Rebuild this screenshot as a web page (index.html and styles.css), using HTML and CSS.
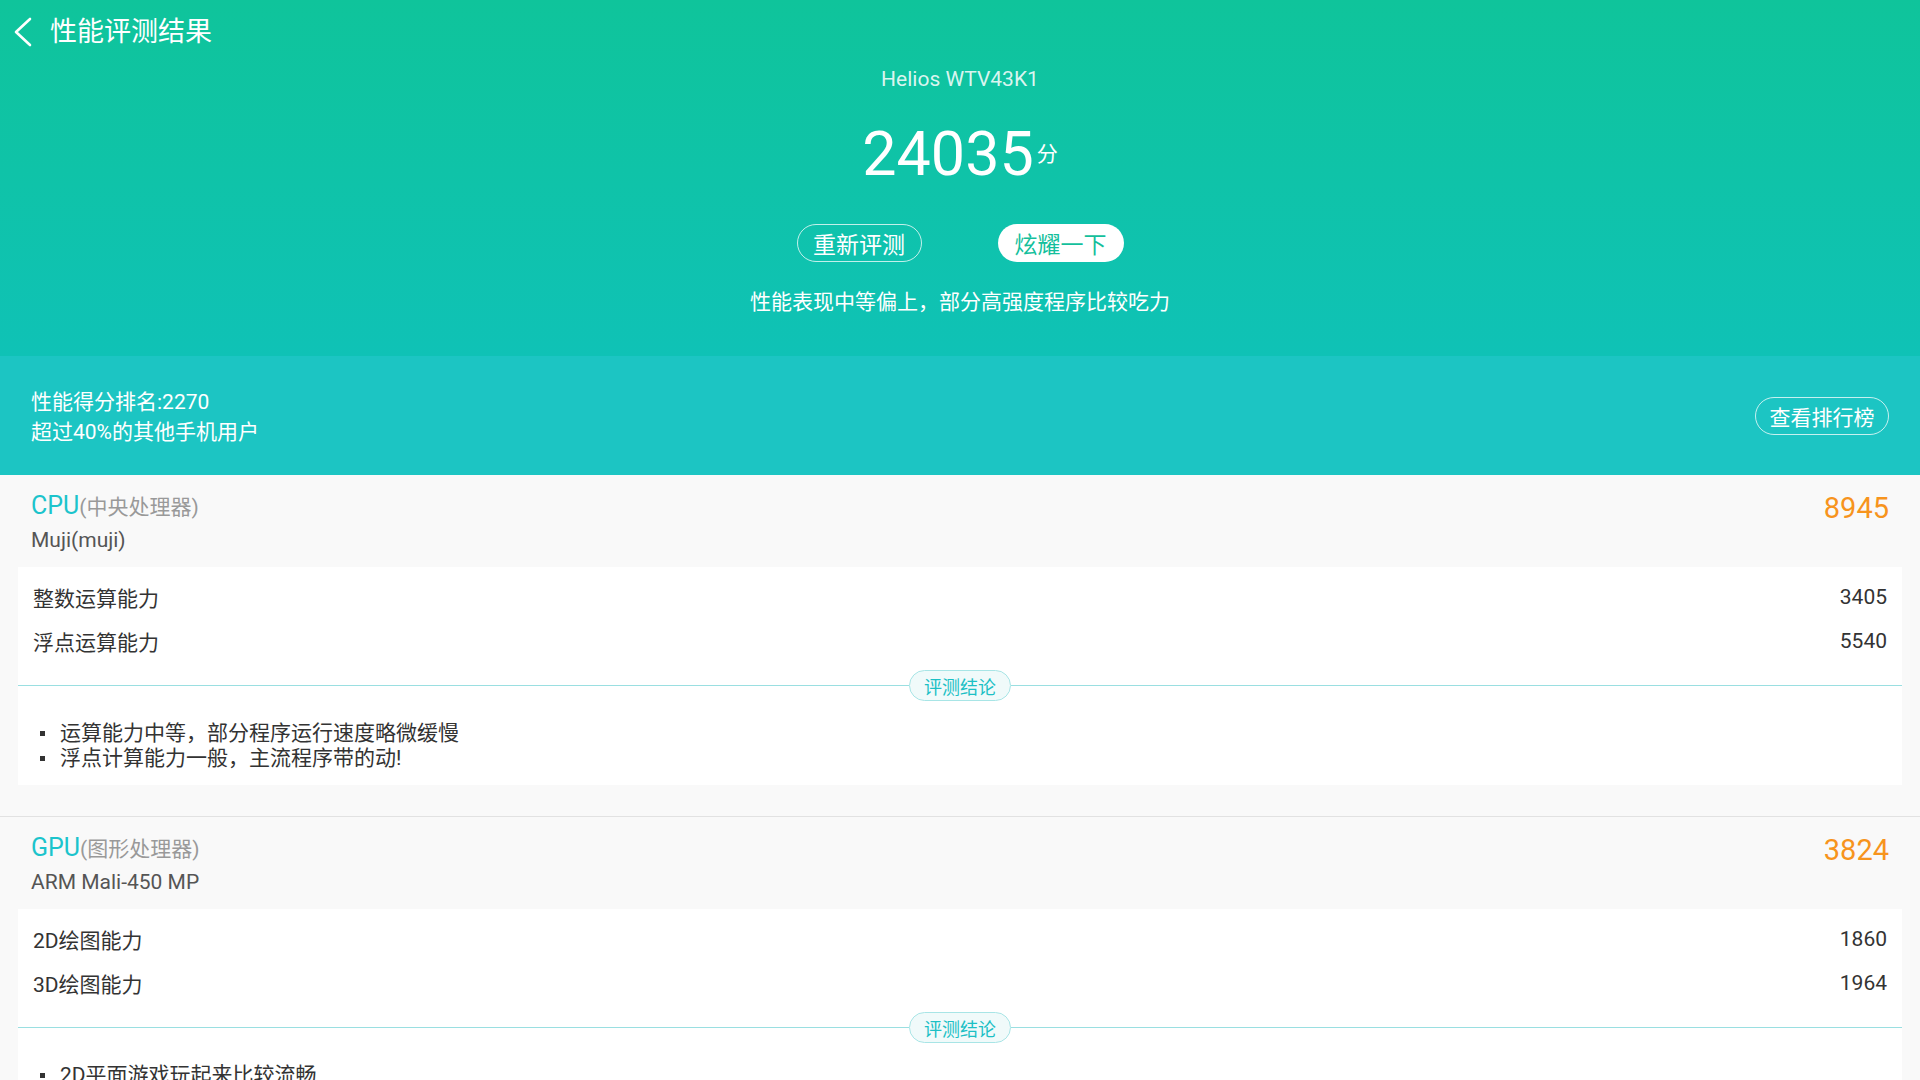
FILE: index.html
```html
<!DOCTYPE html>
<html lang="zh-CN">
<head>
<meta charset="utf-8">
<title>性能评测结果</title>
<link rel="stylesheet" href="styles.css">
</head>
<body>
<div class="page">
  <header class="hero">
    <div class="topbar">
      <svg class="back" width="20" height="30" viewBox="0 0 20 30"><polyline points="17,2 3,15 17,28" fill="none" stroke="#fff" stroke-width="2.6" stroke-linecap="round" stroke-linejoin="round"/></svg>
      <span class="title">性能评测结果</span>
    </div>
    <div class="device">Helios WTV43K1</div>
    <div class="score">24035<span class="unit">分</span></div>
    <div class="actions">
      <span class="btn btn-outline">重新评测</span>
      <span class="btn btn-solid">炫耀一下</span>
    </div>
    <div class="summary">性能表现中等偏上，部分高强度程序比较吃力</div>
  </header>

  <section class="rank">
    <div class="rank-text">
      <div>性能得分排名:2270</div>
      <div>超过40%的其他手机用户</div>
    </div>
    <span class="btn btn-outline btn-rank">查看排行榜</span>
  </section>

  <section class="block">
    <div class="block-head">
      <div class="block-title">
        <div class="name-line"><span class="name">CPU</span><span class="paren">(中央处理器)</span></div>
        <div class="model">Muji(muji)</div>
      </div>
      <div class="block-score">8945</div>
    </div>
    <div class="card">
      <div class="row"><span>整数运算能力</span><span class="num">3405</span></div>
      <div class="row"><span>浮点运算能力</span><span class="num">5540</span></div>
      <div class="divider"><span class="line"></span><span class="pill">评测结论</span><span class="line"></span></div>
      <ul class="notes">
        <li>运算能力中等，部分程序运行速度略微缓慢</li>
        <li>浮点计算能力一般，主流程序带的动!</li>
      </ul>
    </div>
  </section>

  <section class="block">
    <div class="block-head">
      <div class="block-title">
        <div class="name-line"><span class="name">GPU</span><span class="paren">(图形处理器)</span></div>
        <div class="model">ARM Mali-450 MP</div>
      </div>
      <div class="block-score">3824</div>
    </div>
    <div class="card">
      <div class="row"><span>2D绘图能力</span><span class="num">1860</span></div>
      <div class="row"><span>3D绘图能力</span><span class="num">1964</span></div>
      <div class="divider"><span class="line"></span><span class="pill">评测结论</span><span class="line"></span></div>
      <ul class="notes">
        <li>2D平面游戏玩起来比较流畅</li>
        <li>3D游戏运行较为吃力</li>
      </ul>
    </div>
  </section>
</div>
</body>
</html>
```

FILE: styles.css
```css
* { box-sizing: border-box; }
html, body { margin: 0; padding: 0; }
body {
  width: 1920px;
  height: 1080px;
  overflow: hidden;
  background: #f8f8f8;
  font-family: "Roboto", "Noto Sans CJK SC", sans-serif;
  color: #333;
}
.page { width: 1920px; }

.hero {
  height: 356px;
  background: linear-gradient(180deg, #0fc49b 0%, #0fc2b6 100%);
  color: #fff;
  display: flex;
  flex-direction: column;
  align-items: center;
}
.topbar {
  align-self: stretch;
  height: 62px;
  display: flex;
  align-items: center;
  padding-left: 13px;
  padding-top: 2px;
}
.back { display: block; margin-right: 17px; }
.title { font-size: 27px; line-height: 32px; }

.device {
  height: 32px;
  line-height: 32px;
  font-size: 21px;
  color: rgba(255,255,255,0.85);
  padding-top: 1px;
}
.score {
  margin-top: 25px;
  height: 70px;
  line-height: 70px;
  font-size: 61px;
  font-weight: 400;
}
.unit {
  font-size: 21px;
  vertical-align: 14px;
  margin-left: 3px;
}
.actions {
  margin-top: 35px;
  display: flex;
  gap: 76px;
}
.btn {
  display: inline-flex;
  align-items: center;
  justify-content: center;
  height: 38px;
  border-radius: 19px;
  font-size: 23px;
}
.btn-outline {
  width: 125px;
  border: 1.5px solid rgba(255,255,255,0.75);
  color: #fff;
}
.btn-solid {
  width: 126px;
  background: #fff;
  color: #14bf9c;
}
.summary {
  margin-top: 24px;
  font-size: 21px;
  line-height: 32px;
}

.rank {
  height: 119px;
  background: #1cc5c3;
  color: #fff;
  display: flex;
  align-items: center;
  justify-content: space-between;
  padding: 0 31px;
}
.rank-text { font-size: 21px; line-height: 30px; padding-top: 3px; }
.btn-rank { width: 134px; font-size: 21px; }

.block {
  padding: 16px 18px 31px;
  border-bottom: 1px solid #e2e2e2;
  background: #f9f9f9;
}
.block-head {
  display: flex;
  justify-content: space-between;
  align-items: flex-start;
  padding: 0 13px;
}
.name-line { height: 30px; line-height: 30px; }
.name { font-size: 25px; color: #1cc4cc; }
.paren { font-size: 21px; color: #999; }
.model {
  margin-top: 6px;
  font-size: 21px;
  line-height: 26px;
  color: #555;
}
.block-score {
  font-size: 29px;
  line-height: 30px;
  color: #f7941d;
  margin-top: 2px;
}

.card {
  margin-top: 14px;
  background: #fff;
  padding: 8px 0 14px;
}
.row {
  height: 44px;
  display: flex;
  align-items: center;
  justify-content: space-between;
  padding: 0 15px 0 15px;
  font-size: 21px;
  color: #333;
}
.num { font-size: 21px; }

.divider {
  margin-top: 7px;
  height: 31px;
  display: flex;
  align-items: center;
}
.divider .line { flex: 1; height: 1px; background: #9adfe1; }
.pill {
  width: 102px;
  height: 31px;
  border-radius: 16px;
  border: 1px solid #a8e5e6;
  background: #f0fafa;
  color: #1cc0c5;
  font-size: 18px;
  display: flex;
  align-items: center;
  justify-content: center;
}

.notes {
  list-style: none;
  margin: 20px 0 0;
  padding: 0 0 0 22px;
  font-size: 21px;
  line-height: 25px;
  color: #333;
}
.notes li { display: flex; align-items: center; }
.notes li::before {
  content: "";
  width: 5px;
  height: 5px;
  background: #333;
  margin-right: 15px;
  flex: none;
}
```
